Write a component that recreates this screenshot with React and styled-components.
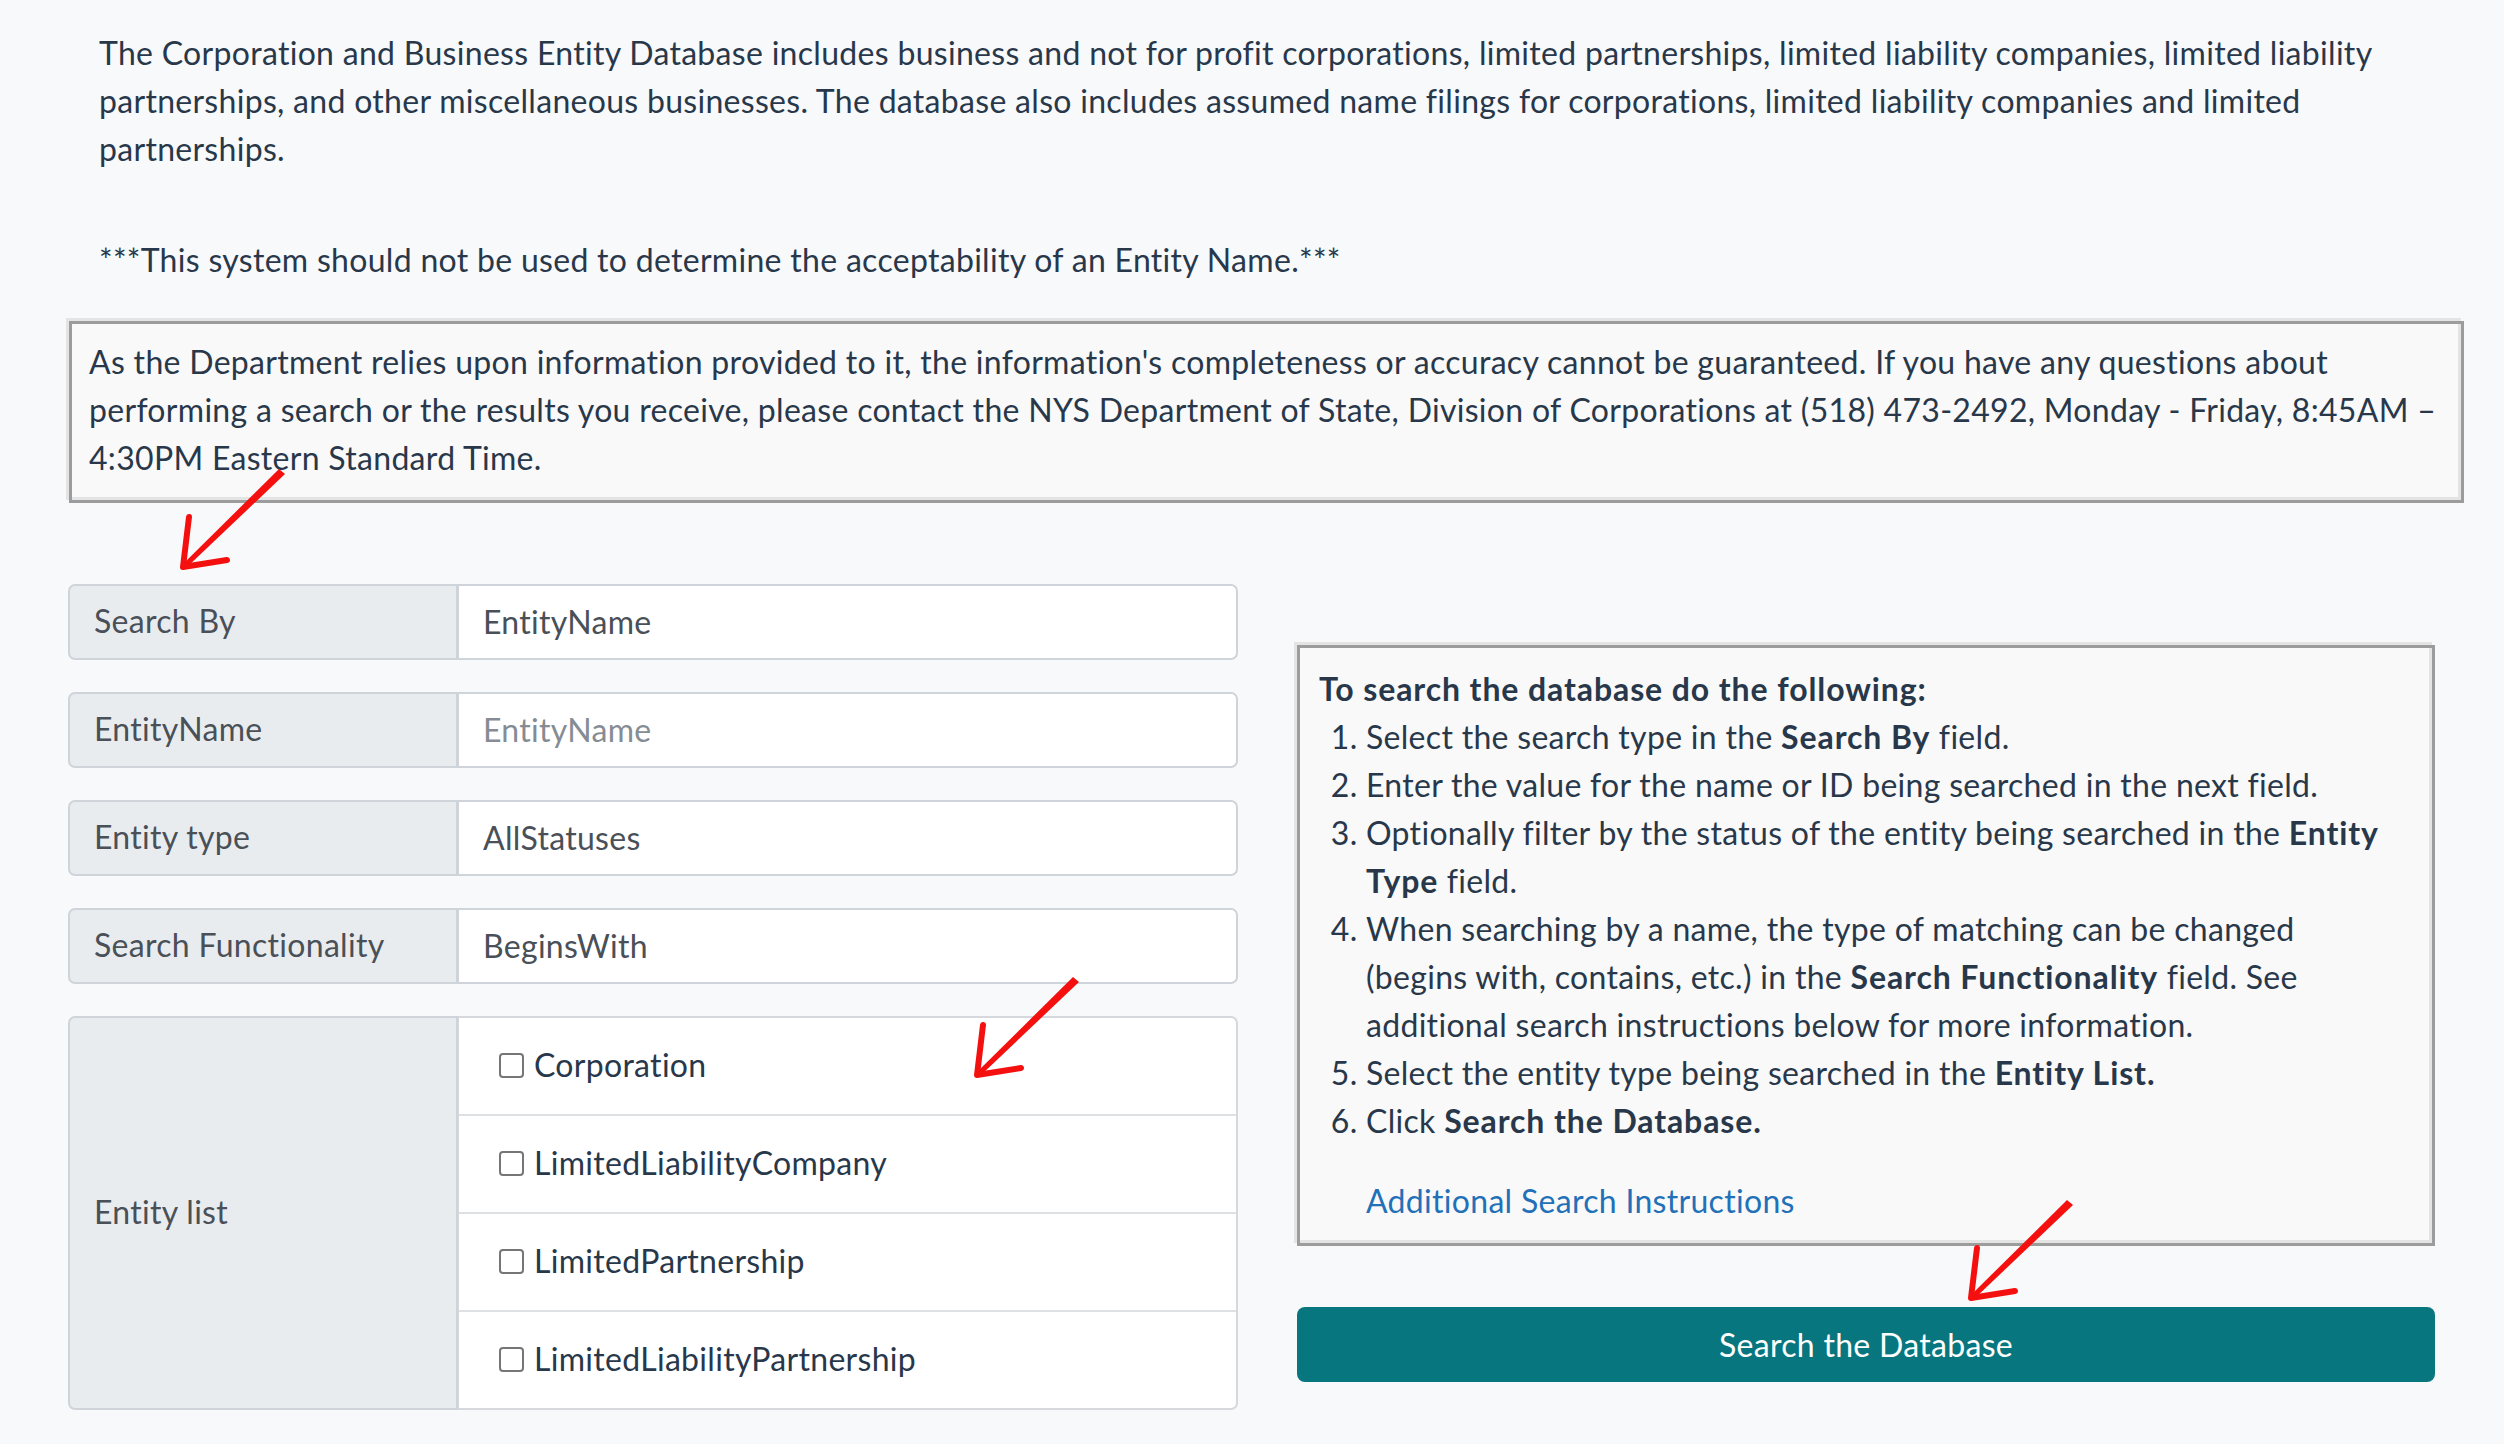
import React from 'react';
import styled, { createGlobalStyle } from 'styled-components';

const GlobalStyle = createGlobalStyle`
  html, body {
    margin: 0;
    padding: 0;
    background: #f8f9fa;
  }
  body {
    font-family: Lato, "Open Sans", "Liberation Sans", sans-serif;
    font-size: 32px;
    line-height: 48px;
    letter-spacing: 0.3px;
    color: #28384a;
  }
  b { letter-spacing: 0.9px; }
  * { box-sizing: border-box; }
`;

const Page = styled.div`
  position: relative;
  width: 2504px;
  min-height: 1444px;
  padding: 29px 40px 40px 68px;
`;

const Intro = styled.p`
  margin: 0 0 ${props => props.gap}px;
  padding: 0 20px 0 31px;
`;

const Notice = styled.div`
  margin: 0 0 0 1px;
  padding: 14px 17px 18px;
  border: 3px solid #9c9c9c;
  box-shadow: -3px -3px 0 0 #e4e4e4, inset -3px -3px 0 0 #e4e4e4;
  background: #f9f9f9;
`;

const FormGrid = styled.div`
  display: grid;
  grid-template-columns: 1170px 1138px;
  column-gap: 59px;
  margin-top: 81px;
`;

const LeftCol = styled.div`
  display: flex;
  flex-direction: column;
  gap: 32px;
`;

const InputGroup = styled.div`
  display: flex;
  align-items: stretch;
  min-height: 76px;
`;

const Addon = styled.div`
  width: 390px;
  flex: none;
  display: flex;
  align-items: center;
  padding: 11px 24px 13px;
  background: #e9ecef;
  border: 2px solid #ced4da;
  border-radius: 7px 0 0 7px;
  color: #495057;
`;

const Field = styled.input`
  flex: 1;
  min-width: 0;
  height: 76px;
  padding: 11px 24px 13px;
  font: inherit;
  letter-spacing: inherit;
  color: #495057;
  background: #fff;
  border: 2px solid #ced4da;
  border-left-width: 1px;
  border-radius: 0 7px 7px 0;
  outline: none;
  &::placeholder {
    color: #858c93;
    opacity: 1;
  }
`;

const ListGroup = styled.div`
  flex: 1;
  display: flex;
  flex-direction: column;
  background: #fff;
  border: 2px solid #d5d9dd;
  border-left-width: 1px;
  border-radius: 0 7px 7px 0;
`;

const ListItem = styled.label`
  display: flex;
  align-items: center;
  gap: 10px;
  height: 48px;
  padding: 23px 40px 25px;
  border-bottom: ${props => (props.last ? 'none' : '2px solid #dee1e4')};
  box-sizing: content-box;
`;

const Check = styled.input`
  appearance: none;
  width: 25px;
  height: 25px;
  margin: 0;
  border: 2px solid #767676;
  border-radius: 4px;
  background: #fff;
`;

const RightCol = styled.div`
  padding-top: 61px;
  display: flex;
  flex-direction: column;
`;

const Instructions = styled.div`
  padding: 17px 34px 18px 19px;
  border: 3px solid #9c9c9c;
  box-shadow: -3px -3px 0 0 #e4e4e4, inset -3px -3px 0 0 #e4e4e4;
  background: #f9f9f9;
`;

const Heading = styled.p`
  margin: 0;
  font-weight: 700;
  letter-spacing: 0.9px;
`;

const Steps = styled.ol`
  margin: 0 0 32px;
  padding-left: 47px;
`;

const LinkLine = styled.p`
  margin: 0;
  padding-left: 47px;
`;

const Link = styled.a`
  color: #2271b8;
  text-decoration: none;
`;

const SearchButton = styled.button`
  margin-top: 61px;
  height: 75px;
  border: none;
  border-radius: 8px;
  background: #08767e;
  color: #fff;
  font: inherit;
  letter-spacing: inherit;
  cursor: pointer;
`;

const ArrowSvg = styled.svg`
  position: absolute;
  left: ${props => props.x}px;
  top: ${props => props.y}px;
  pointer-events: none;
`;

const Arrow = ({ x, y }) => (
  <ArrowSvg x={x} y={y} width="112" height="106" viewBox="0 0 112 106">
    <polygon points="102,2 108,7 9,101 5,98" fill="#f4100f" />
    <path d="M12 50 L6 100 L50 93" fill="none" stroke="#f4100f" strokeWidth="6" strokeLinecap="round" strokeLinejoin="round" />
  </ArrowSvg>
);

const entityTypes = ['Corporation', 'LimitedLiabilityCompany', 'LimitedPartnership', 'LimitedLiabilityPartnership'];

const App = () => {
  return (
    <>
      <GlobalStyle />
      <Page>
        <Intro gap={63}>
          The Corporation and Business Entity Database includes business and not for profit corporations, limited partnerships, limited liability companies, limited liability partnerships, and other miscellaneous businesses. The database also includes assumed name filings for corporations, limited liability companies and limited partnerships.
        </Intro>
        <Intro gap={37}>***This system should not be used to determine the acceptability of an Entity Name.***</Intro>
        <Notice>
          As the Department relies upon information provided to it, the information's completeness or accuracy cannot be guaranteed. If you have any questions about performing a search or the results you receive, please contact the NYS Department of State, Division of Corporations at (518) 473-2492, Monday - Friday, 8:45AM – 4:30PM Eastern Standard Time.
        </Notice>

        <FormGrid>
          <LeftCol>
            <InputGroup>
              <Addon>Search By</Addon>
              <Field value="EntityName" readOnly />
            </InputGroup>
            <InputGroup>
              <Addon>EntityName</Addon>
              <Field placeholder="EntityName" />
            </InputGroup>
            <InputGroup>
              <Addon>Entity type</Addon>
              <Field value="AllStatuses" readOnly />
            </InputGroup>
            <InputGroup>
              <Addon>Search Functionality</Addon>
              <Field value="BeginsWith" readOnly />
            </InputGroup>
            <InputGroup>
              <Addon>Entity list</Addon>
              <ListGroup>
                {entityTypes.map((type, index) => (
                  <ListItem key={type} last={index === entityTypes.length - 1}>
                    <Check type="checkbox" />
                    {type}
                  </ListItem>
                ))}
              </ListGroup>
            </InputGroup>
          </LeftCol>

          <RightCol>
            <Instructions>
              <Heading>To search the database do the following:</Heading>
              <Steps>
                <li>Select the search type in the <b>Search By</b> field.</li>
                <li>Enter the value for the name or ID being searched in the next field.</li>
                <li>Optionally filter by the status of the entity being searched in the <b>Entity Type</b> field.</li>
                <li>When searching by a name, the type of matching can be changed (begins with, contains, etc.) in the <b>Search Functionality</b> field. See additional search instructions below for more information.</li>
                <li>Select the entity type being searched in the <b>Entity List.</b></li>
                <li>Click <b>Search the Database.</b></li>
              </Steps>
              <LinkLine>
                <Link href="#">Additional Search Instructions</Link>
              </LinkLine>
            </Instructions>
            <SearchButton>Search the Database</SearchButton>
          </RightCol>
        </FormGrid>

        <Arrow x={177} y={467} />
        <Arrow x={971} y={975} />
        <Arrow x={1965} y={1198} />
      </Page>
    </>
  );
};

export default App;
